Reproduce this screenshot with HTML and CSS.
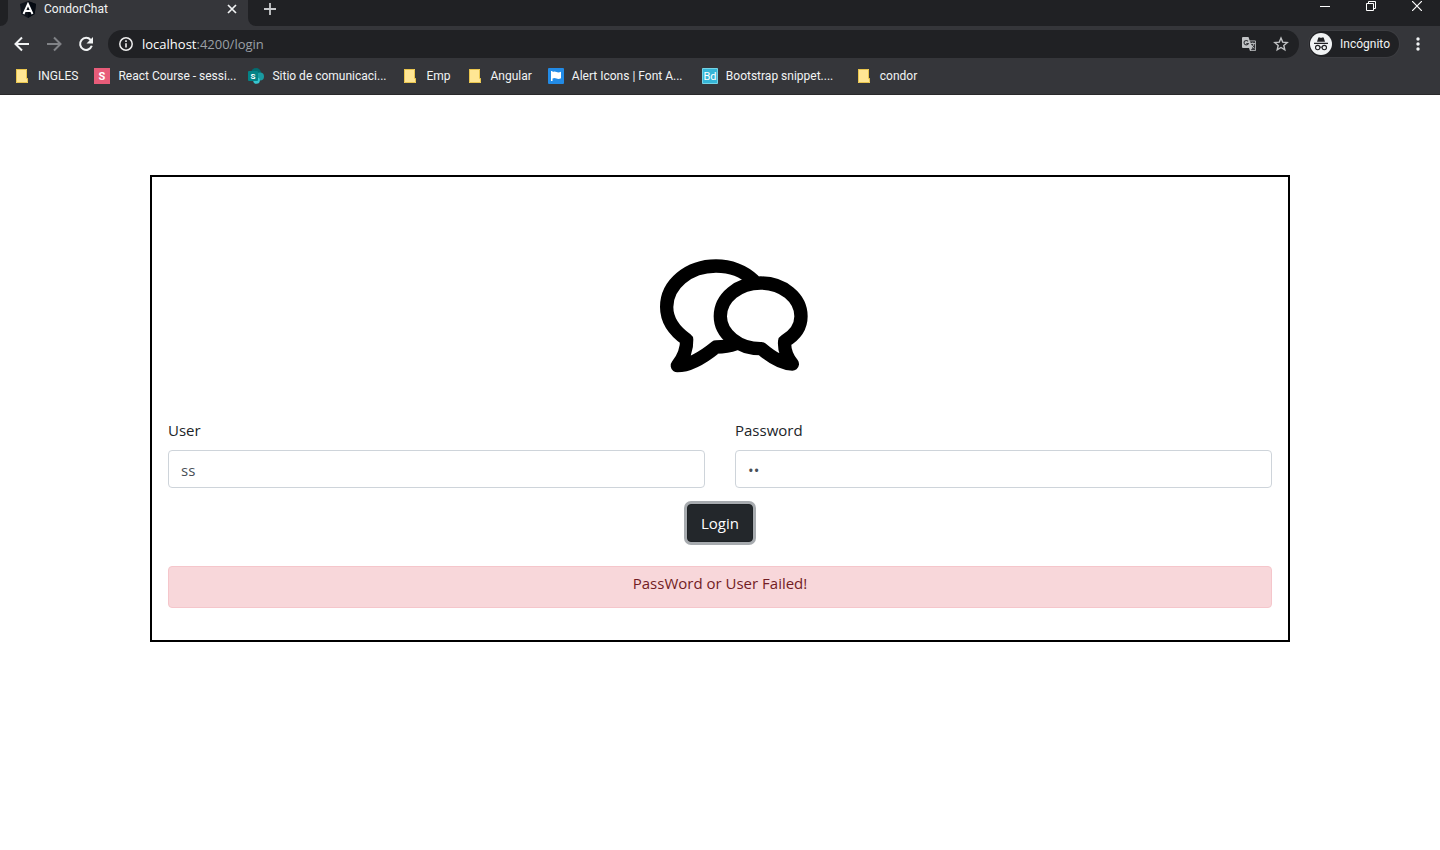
FILE: index.html
```html
<!DOCTYPE html>
<html lang="en">
<head>
<meta charset="utf-8">
<title>CondorChat</title>
<link rel="stylesheet" href="styles.css">
</head>
<body>
<header class="browser">
  <div class="tabstrip">
    <div class="prev-tab"></div>
    <div class="tab">
      <svg class="tab-icon" width="16" height="17" viewBox="0 0 16 17"><path d="M8 0l8 3-1.300 10L8 17l-6.700-4L0 3z" fill="#10151d"/><path d="M8 0l8 3-1.300 10L8 17z" fill="#050a12"/><path d="M3.500 13L8 3l4.500 10M5.300 10h5.400" fill="none" stroke="#fff" stroke-width="1.900"/></svg>
      <span class="tab-title">CondorChat</span>
      <button class="icon-btn" aria-label="Close tab"><svg width="10" height="10" viewBox="0 0 10 10"><path d="M1 1l8 8M9 1l-8 8" stroke="#f1f3f4" stroke-width="1.700"/></svg></button>
    </div>
    <div class="tab-rest">
      <button class="icon-btn" aria-label="New tab"><svg width="12" height="12" viewBox="0 0 12 12"><path d="M6 0v12M0 6h12" stroke="#c8cacd" stroke-width="1.800"/></svg></button>
      <div class="window-controls">
        <button class="icon-btn" aria-label="Minimize"><svg width="10" height="10" viewBox="0 0 10 10"><path d="M0 5.500h10" stroke="#fff"/></svg></button>
        <button class="icon-btn" aria-label="Restore"><svg width="10" height="10" viewBox="0 0 10 10"><path d="M.5 2.500h7v7h-7zM2.500 2.500v-2h7v7h-2" fill="none" stroke="#fff"/></svg></button>
        <button class="icon-btn" aria-label="Close"><svg width="10" height="10" viewBox="0 0 10 10"><path d="M0 0l10 10M10 0L0 10" stroke="#fff" stroke-width="1.200"/></svg></button>
      </div>
    </div>
  </div>
  <div class="toolbar">
    <div class="nav">
      <button class="icon-btn" aria-label="Back"><svg width="16" height="16" viewBox="0 0 16 16"><path d="M15 8H2M8 1.500L1.500 8 8 14.500" fill="none" stroke="#f1f3f4" stroke-width="2"/></svg></button>
      <button class="icon-btn" aria-label="Forward"><svg width="16" height="16" viewBox="0 0 16 16"><path d="M1 8h13M8 1.500L14.500 8 8 14.500" fill="none" stroke="#808286" stroke-width="2"/></svg></button>
      <button class="icon-btn" aria-label="Reload"><svg width="16" height="16" viewBox="0 0 16 16"><path d="M12.700 4A6 6 0 1 0 13.800 9.800" fill="none" stroke="#f1f3f4" stroke-width="2"/><path d="M15 1v6.500H8.500z" fill="#f1f3f4"/></svg></button>
    </div>
    <div class="omnibox">
      <svg width="14" height="14" viewBox="0 0 14 14"><circle cx="7" cy="7" r="6.200" fill="none" stroke="#eee" stroke-width="1.500"/><path d="M7 6.200v4.300M7 3.300v1.700" stroke="#eee" stroke-width="1.600"/></svg>
      <div class="url"><span class="host">localhost</span>:4200/login</div>
      <button class="icon-btn" aria-label="Translate"><svg width="14" height="14" viewBox="0 0 14 14"><path d="M1 0h5.500l1.200 3.500H13q1 0 1 1V13q0 1-1 1H8l-1-3H1q-1 0-1-1V1q0-1 1-1z" fill="#c1c3c5"/><path d="M8 4.300h5.200v9H8.500l2-2.300z" fill="#35363a"/><path d="M6 4.300a2.200 2.200 0 1 0 .3 2.200H4.300" fill="none" stroke="#35363a" stroke-width="1.100"/><path d="M8.500 6.500H13M10.700 5.500v1M12 6.800q-.5 2.500-3 4M9.300 8q1 2 3 3.300" fill="none" stroke="#c1c3c5" stroke-width=".9"/></svg></button>
      <button class="icon-btn" aria-label="Bookmark"><svg width="16" height="16" viewBox="0 0 16 16"><path d="M8 2l1.700 4.100 4.500.4-3.400 2.900 1 4.400L8 11.500l-3.800 2.300 1-4.400-3.400-2.900 4.500-.4z" fill="none" stroke="#c1c3c5" stroke-width="1.400"/></svg></button>
    </div>
    <div class="incognito">
      <svg width="22" height="22" viewBox="0 0 22 22"><circle cx="11" cy="11" r="11" fill="#f1f3f4"/><path d="M7 8.800L8.200 5q.4-1 1.300-.6 1.500.6 3 0 .9-.4 1.300.6L15 8.800zM4 9.800h14v1.200H4z" fill="#202124"/><g fill="none" stroke="#202124" stroke-width="1.100"><circle cx="7.700" cy="14.600" r="2.200"/><circle cx="14.300" cy="14.600" r="2.200"/><path d="M9.900 14.400q1.100-.7 2.200 0"/></g></svg>
      <span>Incógnito</span>
    </div>
    <button class="icon-btn" aria-label="Menu"><svg width="4" height="14" viewBox="0 0 4 14"><g fill="#f1f3f4"><circle cx="2" cy="2" r="1.700"/><circle cx="2" cy="7" r="1.700"/><circle cx="2" cy="12" r="1.700"/></g></svg></button>
  </div>
  <nav class="bookmarks">
    <a class="bookmark" href="#"><svg width="16" height="16" viewBox="0 0 16 16"><path d="M2 1h11v9.500h1V15H2z" fill="#ffe694"/><path d="M2.500 1v13.500h11v-4h-1V1.500h-10" fill="none" stroke="#e9c54d"/></svg><span>INGLES</span></a>
    <a class="bookmark" href="#"><svg width="16" height="16" viewBox="0 0 16 16"><path d="M0 0h16v16H0z" fill="#e85c79"/><text class="glyph-bold" x="8" y="12" text-anchor="middle">S</text></svg><span class="long">React Course - sessi...</span></a>
    <a class="bookmark" href="#"><svg width="16" height="16" viewBox="0 0 16 16"><circle cx="8" cy="5" r="5" fill="#036c70"/><circle cx="12" cy="8.500" r="4" fill="#1a9ba1"/><circle cx="8.500" cy="12.500" r="3.300" fill="#37c6d0"/><rect y="3" width="10" height="10" rx="1" fill="#038387"/><text class="glyph-small" x="5" y="11" text-anchor="middle">S</text></svg><span class="long">Sitio de comunicaci...</span></a>
    <a class="bookmark" href="#"><svg width="16" height="16" viewBox="0 0 16 16"><path d="M2 1h11v9.500h1V15H2z" fill="#ffe694"/><path d="M2.500 1v13.500h11v-4h-1V1.500h-10" fill="none" stroke="#e9c54d"/></svg><span>Emp</span></a>
    <a class="bookmark" href="#"><svg width="16" height="16" viewBox="0 0 16 16"><path d="M2 1h11v9.500h1V15H2z" fill="#ffe694"/><path d="M2.500 1v13.500h11v-4h-1V1.500h-10" fill="none" stroke="#e9c54d"/></svg><span>Angular</span></a>
    <a class="bookmark" href="#"><svg width="16" height="16" viewBox="0 0 16 16"><rect width="16" height="16" rx="1" fill="#228be6"/><path d="M3 3h1.500v1q2-1 4 0t4.500-.3v6.500q-2.500 1.300-4.500.3t-4 0V13H3z" fill="#fff"/></svg><span class="long">Alert Icons | Font A...</span></a>
    <a class="bookmark" href="#"><svg width="16" height="16" viewBox="0 0 16 16"><path d="M.5.5h15v15H.5z" fill="#35b5d6" stroke="#75d4e6"/><text class="glyph" x="8" y="12" text-anchor="middle">Bd</text></svg><span class="long">Bootstrap snippet....</span></a>
    <a class="bookmark" href="#"><svg width="16" height="16" viewBox="0 0 16 16"><path d="M2 1h11v9.500h1V15H2z" fill="#ffe694"/><path d="M2.500 1v13.500h11v-4h-1V1.500h-10" fill="none" stroke="#e9c54d"/></svg><span>condor</span></a>
  </nav>
</header>
<main class="page">
  <form class="login">
    <div class="logo">
      <svg width="148" height="114" viewBox="60 56 444 342" fill="#fff" stroke="#000" stroke-width="40" stroke-linejoin="round" stroke-linecap="round">
        <path d="M340 120C312 92 270 77 228 77C146 77 80 132 80 200C80 238 103 272 140 298C141 326 132 350 112 376C148 376 185 355 228 320C255 320 270 317 285 311"/>
        <path d="M362 128C428 128 483 172 483 228C483 258 465 285 434 303C432 328 440 350 457 371C428 371 398 354 364 325C295 326 241 280 241 228C241 172 296 128 362 128Z"/>
      </svg>
    </div>
    <div class="fields">
      <div class="field"><label for="user">User</label><input id="user" type="text" value="ss"></div>
      <div class="field"><label for="password">Password</label><input id="password" type="password" value="ss"></div>
    </div>
    <button class="submit" type="button">Login</button>
    <div class="alert" role="alert">PassWord or User Failed!</div>
  </form>
</main>
</body>
</html>
```
FILE: styles.css
```css
* { box-sizing: border-box; }
body { margin: 0; background: #fff; color: #212529; font: 15px/24px "Open Sans", "Noto Sans", sans-serif; }
svg { display: block; flex: none; }
.browser { background: #35363a; color: #f1f3f4; font-family: Roboto, sans-serif; font-size: 12px; line-height: 16px; border-bottom: 1px solid #29282a; }
.icon-btn { display: flex; flex: none; padding: 0; border: 0; background: none; }
.tabstrip { display: flex; height: 26px; }
.prev-tab { width: 8px; background: #202124; border-bottom-right-radius: 8px; }
.tab { display: flex; align-items: center; width: 240px; padding: 0 11px 8px 12px; }
.tab-title { flex: 1; padding-left: 8px; }
.tab-rest { display: flex; flex: 1; justify-content: space-between; padding: 3px 18px 0 16px; background: #202124; border-bottom-left-radius: 8px; }
.window-controls { display: flex; gap: 36px; padding-bottom: 10px; margin-top: -2px; }
.toolbar { display: flex; align-items: center; height: 36px; padding: 0 20px 0 14px; }
.nav { display: flex; gap: 16px; margin-right: 14px; }
.omnibox { display: flex; flex: 1; align-items: center; height: 28px; padding: 0 10px 0 11px; border-radius: 14px; background: #202124; }
.url { flex: 1; padding-left: 9px; font-family: "Open Sans", "Noto Sans", sans-serif; font-size: 13px; color: #9aa0a6; }
.host { color: #fff; }
.omnibox .icon-btn + .icon-btn { margin-left: 17px; }
.incognito { display: flex; align-items: center; gap: 8px; height: 26px; margin: 0 17px 0 10px; padding: 0 9px 0 1px; border-radius: 13px; background: #202124; box-shadow: 0 0 0 1px #3c3d41; }
.bookmarks { display: flex; gap: 16px; height: 32px; padding: 6px 14px 0; overflow: hidden; }
.bookmark { display: flex; gap: 8px; height: 16px; color: inherit; text-decoration: none; white-space: nowrap; }
.long { width: 114px; }
.glyph, .glyph-bold, .glyph-small { fill: #fff; font-size: 11px; }
.glyph-bold { font-weight: 700; }
.glyph-small { font-size: 8px; font-weight: 700; }
.page { padding: 80px 16px 0; }
.login { display: flex; flex-direction: column; max-width: 1140px; margin: 0 auto; padding: 82px 16px 32px; border: 2px solid #000; }
.logo { display: flex; justify-content: center; padding-left: 28px; margin-bottom: 45px; }
.fields { display: grid; grid-template-columns: 1fr 1fr; gap: 30px; }
.field { display: flex; flex-direction: column; gap: 8px; }
.field input { width: 100%; height: 38px; padding: 6px 12px 4px; border: 1px solid #ced4da; border-radius: 4px; background: #fff; color: #495057; font: inherit; }
.submit { align-self: center; height: 38px; margin: 16px 0 24px; padding: 0 13px; border: 1px solid #1d2124; border-radius: 4px; background: #23272b; color: #fff; font: inherit; box-shadow: 0 0 0 3px #a7abaf; }
.alert { min-height: 42px; padding: 4px 20px; border: 1px solid #f5c6cb; border-radius: 4px; background: #f8d7da; color: #721c24; text-align: center; }
```
